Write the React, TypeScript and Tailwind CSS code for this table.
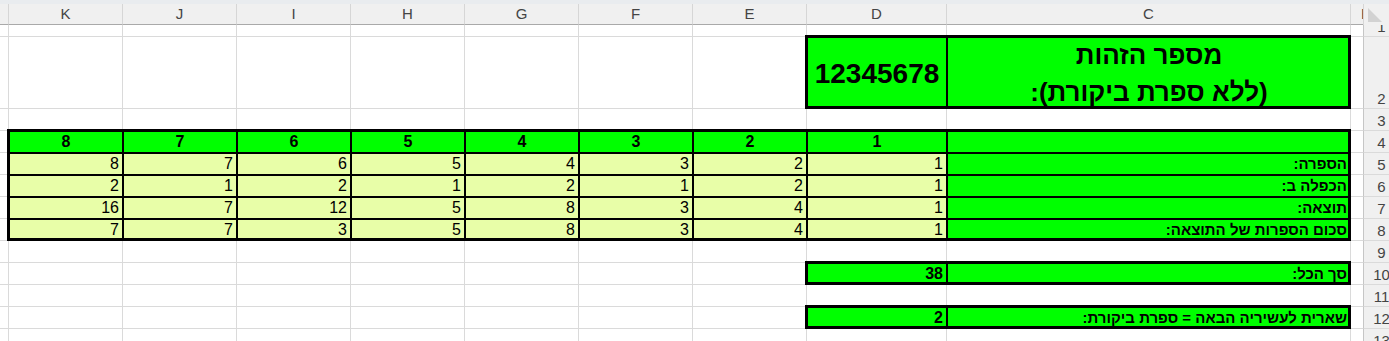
import clsx from "clsx";

// grid placement, written out so Tailwind picks them up
const COL_START = [
  "col-start-1",
  "col-start-2",
  "col-start-3",
  "col-start-4",
  "col-start-5",
  "col-start-6",
  "col-start-7",
  "col-start-8",
  "col-start-9",
  "col-start-10",
  "col-start-11",
  "col-start-12",
];
const ROW_START = [
  "row-start-1",
  "row-start-2",
  "row-start-3",
  "row-start-4",
  "row-start-5",
  "row-start-6",
  "row-start-7",
  "row-start-8",
  "row-start-9",
  "row-start-10",
  "row-start-11",
  "row-start-12",
  "row-start-13",
  "row-start-14",
];

// visual order, RTL sheet: L (cut) K J I H G F E D C B
const COLS = ["", "K", "J", "I", "H", "G", "F", "E", "D", "C", "B"];
const D = 8;
const C = 9;

type Spec = {
  text?: React.ReactNode;
  fill?: "green" | "light";
  align?: "center" | "right";
  bold?: boolean;
  size?: "big" | "title" | "label";
  rtl?: boolean;
};

const tableRows: { row: number; label: string; values: number[] }[] = [
  { row: 5, label: "הספרה:", values: [8, 7, 6, 5, 4, 3, 2, 1] },
  { row: 6, label: "הכפלה ב:", values: [2, 1, 2, 1, 2, 1, 2, 1] },
  { row: 7, label: "תוצאה:", values: [16, 7, 12, 5, 8, 3, 4, 1] },
  { row: 8, label: "סכום הספרות של התוצאה:", values: [7, 7, 3, 5, 8, 3, 4, 1] },
];

function buildSpecs() {
  const specs: Record<string, Spec> = {};
  const set = (r: number, c: number, s: Spec) => (specs[`${r}-${c}`] = s);

  set(2, D, { text: "12345678", fill: "green", align: "center", bold: true, size: "big" });
  set(2, C, {
    text: (
      <>
        מספר הזהות
        <br />
        (ללא ספרת ביקורת):
      </>
    ),
    fill: "green",
    align: "center",
    bold: true,
    size: "title",
    rtl: true,
  });

  for (let c = 1; c <= 8; c++) {
    set(4, c, { text: 9 - c, fill: "green", align: "center", bold: true });
  }
  set(4, C, { fill: "green" });

  tableRows.forEach(({ row, label, values }) => {
    values.forEach((v, i) => set(row, i + 1, { text: v, fill: "light", align: "right" }));
    set(row, C, { text: label, fill: "green", align: "right", bold: true, size: "label", rtl: true });
  });

  set(10, D, { text: 38, fill: "green", align: "right", bold: true });
  set(10, C, { text: "סך הכל:", fill: "green", align: "right", bold: true, size: "label", rtl: true });
  set(12, D, { text: 2, fill: "green", align: "right", bold: true });
  set(12, C, {
    text: "שארית לעשיריה הבאה = ספרת ביקורת:",
    fill: "green",
    align: "right",
    bold: true,
    size: "label",
    rtl: true,
  });
  return specs;
}

const specs = buildSpecs();

const SheetCell = ({ row, col }: { row: number; col: number }) => {
  const spec = specs[`${row}-${col}`];
  const filled = !!spec?.fill;
  return (
    <div
      dir={spec?.rtl ? "rtl" : undefined}
      className={clsx(
        COL_START[col],
        ROW_START[row],
        "flex items-center overflow-hidden whitespace-nowrap text-black",
        filled
          ? "border-l-2 border-t-2 border-black"
          : clsx(col > 0 && "border-l", row > 1 && "border-t", "border-[#dadada] bg-white"),
        spec?.fill === "green" && "bg-[#00ff00]",
        spec?.fill === "light" && "bg-[#e8fea8]",
        spec?.align === "center" && "justify-center text-center",
        spec?.align === "right" && (spec.rtl ? "justify-start pr-[3px]" : "justify-end pr-[3px]"),
        spec?.bold && "font-bold",
        spec?.size === "big" && "text-[28px] leading-[37px]",
        spec?.size === "title" && "pt-[1px] text-[26px] leading-[37px]",
        spec?.size === "label" && "text-[15px] leading-[18px]",
        !spec?.size && "text-[16px] leading-[18px]"
      )}
    >
      {spec?.text}
    </div>
  );
};

const ColumnHeader = ({ col }: { col: number }) => (
  <div className={clsx(COL_START[col], "row-start-1 flex flex-col bg-[#e9ecef]")}>
    <div
      className={clsx(
        "mt-[4px] flex flex-1 items-center overflow-hidden border-b border-b-[#a9a9a9] bg-[#f0f0f0] text-[15px] text-[#444]",
        col > 0 && "border-l border-l-[#d6d6d6]",
        col === 10 ? "justify-start pl-[10px]" : "justify-center"
      )}
    >
      {COLS[col]}
    </div>
  </div>
);

const RowHeader = ({ row }: { row: number }) => (
  <div
    className={clsx(
      "col-start-12",
      ROW_START[row],
      "flex items-end justify-center overflow-hidden border-l border-l-[#c6c6c6] bg-[#f0f0f0] text-[15px] leading-[18px] text-[#444]",
      row > 1 && "border-t border-t-[#dadada]"
    )}
  >
    {row}
  </div>
);

export default function App() {
  const rows = Array.from({ length: 13 }, (_, i) => i + 1);
  return (
    <div className="h-[341px] w-[1389px] overflow-hidden bg-white font-['Liberation_Sans',Arial,'DejaVu_Sans',sans-serif]">
      <div className="grid w-[1399px] grid-cols-[8px_repeat(7,114px)_140px_404px_13px_36px] grid-rows-[25px_11px_72px_repeat(11,22px)]">
        {COLS.map((_, c) => (
          <ColumnHeader key={`h${c}`} col={c} />
        ))}
        <div className="col-start-12 row-start-1 flex flex-col bg-[#e9ecef]">
          <div className="mt-[4px] flex-1 border-l border-l-[#d6d6d6] bg-[#f0f0f0] pl-[4px] pt-[4px]">
            <svg width="15" height="15" viewBox="0 0 15 15">
              <polygon points="0,0 0,14 14,14" fill="#d2d2d2" />
            </svg>
          </div>
        </div>

        {rows.map((r) => (
          <div key={r} className="contents">
            {COLS.map((_, c) => (
              <SheetCell key={c} row={r} col={c} />
            ))}
            <RowHeader row={r} />
          </div>
        ))}

        {/* thick outside borders */}
        <div className="pointer-events-none col-start-9 col-end-11 row-start-3 row-end-4 m-[-1px] border-[3px] border-black" />
        <div className="pointer-events-none col-start-2 col-end-11 row-start-5 row-end-10 m-[-1px] border-[3px] border-black" />
        <div className="pointer-events-none col-start-9 col-end-11 row-start-11 row-end-12 m-[-1px] border-[3px] border-black" />
        <div className="pointer-events-none col-start-9 col-end-11 row-start-13 row-end-14 m-[-1px] border-[3px] border-black" />
      </div>
    </div>
  );
}
